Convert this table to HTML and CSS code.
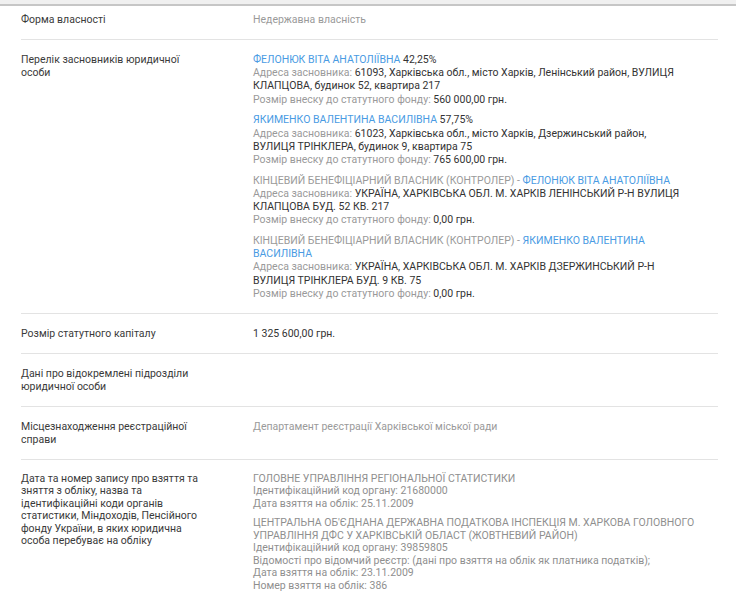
FILE: index.html
```html
<!DOCTYPE html>
<html lang="uk">
<head>
<meta charset="utf-8">
<link rel="stylesheet" href="styles.css">
</head>
<body>
<div class="topbar"></div>
<div class="table">
  <div class="row first">
    <div class="label"><span>Форма власності</span></div>
    <div class="value muted">Недержавна власність</div>
  </div>
  <div class="row">
    <div class="label"><span>Перелік засновників юридичної особи</span></div>
    <div class="value founders">
      <div class="block">
        <a class="link">ФЕЛОНЮК ВІТА АНАТОЛІЇВНА</a> <span class="dark">42,25%</span><br>
        <span class="muted">Адреса засновника:</span> <span class="dark">61093, Харківська обл., місто Харків, Ленінський район, ВУЛИЦЯ КЛАПЦОВА, будинок 52, квартира 217</span><br>
        <span class="muted">Розмір внеску до статутного фонду:</span> <span class="dark">560 000,00 грн.</span>
      </div>
      <div class="block">
        <a class="link">ЯКИМЕНКО ВАЛЕНТИНА ВАСИЛІВНА</a> <span class="dark">57,75%</span><br>
        <span class="muted">Адреса засновника:</span> <span class="dark">61023, Харківська обл., місто Харків, Дзержинський район, ВУЛИЦЯ ТРІНКЛЕРА, будинок 9, квартира 75</span><br>
        <span class="muted">Розмір внеску до статутного фонду:</span> <span class="dark">765 600,00 грн.</span>
      </div>
      <div class="block">
        <span class="muted">КІНЦЕВИЙ БЕНЕФІЦІАРНИЙ ВЛАСНИК (КОНТРОЛЕР) - </span><a class="link">ФЕЛОНЮК ВІТА АНАТОЛІЇВНА</a><br>
        <span class="muted">Адреса засновника:</span> <span class="dark">УКРАЇНА, ХАРКІВСЬКА ОБЛ. М. ХАРКІВ ЛЕНІНСЬКИЙ Р-Н ВУЛИЦЯ КЛАПЦОВА БУД. 52 КВ. 217</span><br>
        <span class="muted">Розмір внеску до статутного фонду:</span> <span class="dark">0,00 грн.</span>
      </div>
      <div class="block">
        <span class="muted">КІНЦЕВИЙ БЕНЕФІЦІАРНИЙ ВЛАСНИК (КОНТРОЛЕР) - </span><a class="link">ЯКИМЕНКО ВАЛЕНТИНА ВАСИЛІВНА</a><br>
        <span class="muted">Адреса засновника:</span> <span class="dark">УКРАЇНА, ХАРКІВСЬКА ОБЛ. М. ХАРКІВ ДЗЕРЖИНСЬКИЙ Р-Н ВУЛИЦЯ ТРІНКЛЕРА БУД. 9 КВ. 75</span><br>
        <span class="muted">Розмір внеску до статутного фонду:</span> <span class="dark">0,00 грн.</span>
      </div>
    </div>
  </div>
  <div class="row">
    <div class="label"><span>Розмір статутного капіталу</span></div>
    <div class="value dark">1 325 600,00 грн.</div>
  </div>
  <div class="row">
    <div class="label"><span>Дані про відокремлені підрозділи юридичної особи</span></div>
    <div class="value"></div>
  </div>
  <div class="row">
    <div class="label"><span>Місцезнаходження реєстраційної справи</span></div>
    <div class="value muted">Департамент реєстрації Харківської міської ради</div>
  </div>
  <div class="row last">
    <div class="label"><span>Дата та номер запису про взяття та зняття з обліку, назва та ідентифікаційні коди органів статистики, Міндоходів, Пенсійного фонду України, в яких юридична особа перебуває на обліку</span></div>
    <div class="value organs">
      <div class="block">
        ГОЛОВНЕ УПРАВЛІННЯ РЕГІОНАЛЬНОЇ СТАТИСТИКИ<br>
        Ідентифікаційний код органу: 21680000<br>
        Дата взяття на облік: 25.11.2009
      </div>
      <div class="block">
        ЦЕНТРАЛЬНА ОБ'ЄДНАНА ДЕРЖАВНА ПОДАТКОВА ІНСПЕКЦІЯ М. ХАРКОВА ГОЛОВНОГО УПРАВЛІННЯ ДФС У ХАРКІВСЬКІЙ ОБЛАСТ (ЖОВТНЕВИЙ РАЙОН)<br>
        Ідентифікаційний код органу: 39859805<br>
        Відомості про відомчий реєстр: (дані про взяття на облік як платника податків);<br>
        Дата взяття на облік: 23.11.2009<br>
        Номер взяття на облік: 386
      </div>
    </div>
  </div>
</div>
</body>
</html>
```

FILE: styles.css
```css
html, body {
  margin: 0;
  padding: 0;
  background: #ffffff;
}
body {
  font-family: Roboto, "Noto Sans", sans-serif;
  font-size: 10.5px;
  line-height: 13px;
  color: #3a3a3a;
}
.topbar {
  height: 4px;
  background: #f0f0f0;
  border-bottom: 2px solid #c6c6c6;
}
.table {
  margin-left: 21px;
  width: 697px;
}
.row {
  display: flex;
  padding: 13px 0;
  border-bottom: 1px solid #e3e3e3;
}
.row.first {
  padding-top: 7px;
}
.row.last {
  border-bottom: none;
}
.label {
  width: 232px;
  flex: none;
}
.label span {
  display: block;
  max-width: 184px;
  color: #3a3a3a;
}
.row.last .label span {
  line-height: 12.5px;
}
.value {
  flex: 1;
  min-width: 0;
}
.founders {
  max-width: 428px;
  line-height: 13.2px;
}
.founders .block + .block {
  margin-top: 7.5px;
}
.organs {
  color: #8f8f8f;
  line-height: 12.5px;
}
.organs .block + .block {
  margin-top: 7px;
}
.muted {
  color: #9a9a9a;
}
.dark {
  color: #333333;
}
.link {
  color: #4a9be3;
  text-decoration: none;
}
```
